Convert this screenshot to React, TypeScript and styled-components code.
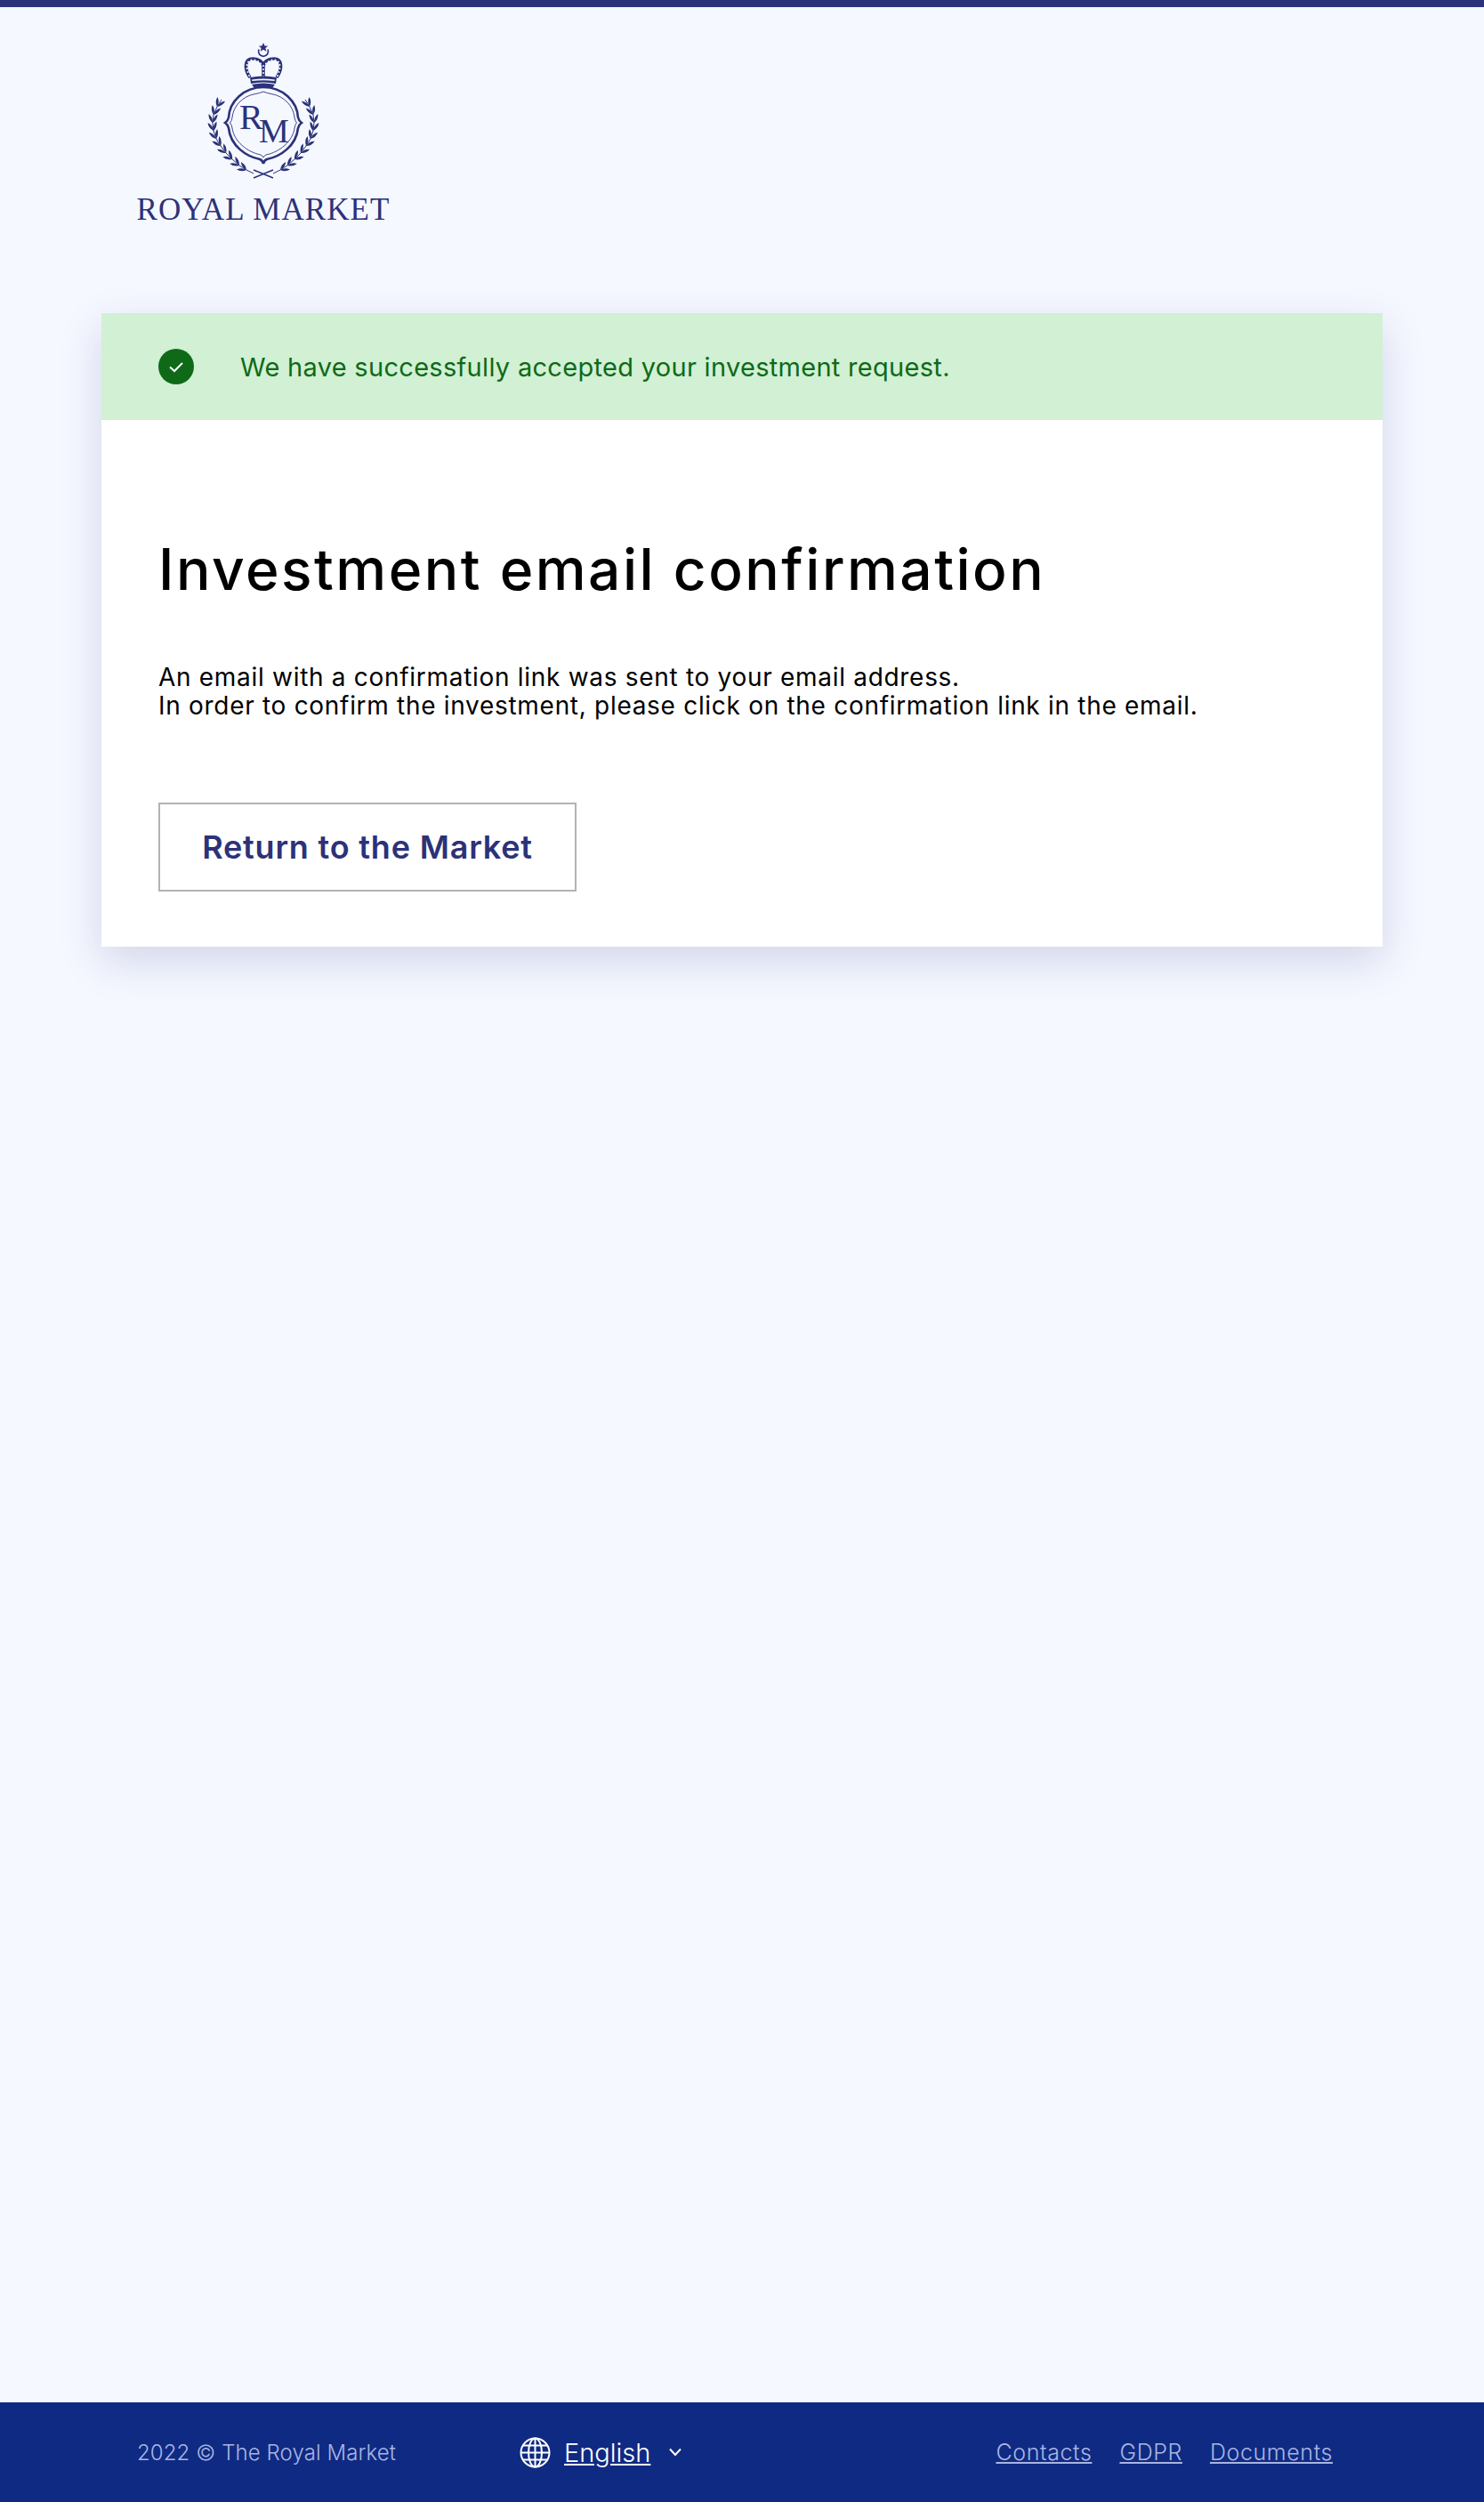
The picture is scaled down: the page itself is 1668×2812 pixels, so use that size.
import styled, { createGlobalStyle } from "styled-components";

const GlobalStyle = createGlobalStyle`
  html, body { margin: 0; padding: 0; }
  body { background: #f5f8ff; font-family: Inter, "Noto Sans", sans-serif; }
`;

const Page = styled.div`
  min-height: 2812px;
  display: flex;
  flex-direction: column;
  border-top: 8px solid #2c3279;
  box-sizing: border-box;
`;
const Header = styled.header`
  padding: 32px 0 0 154px;
  height: 344px;
  box-sizing: border-box;
`;
const Logo = styled.div`
  width: 284px;
  display: flex;
  flex-direction: column;
  align-items: center;
  color: #2c3279;
`;
const EmblemSvg = styled.svg`
  margin-right: 2px;
`;
const Wordmark = styled.div`
  font-family: "Liberation Serif", serif;
  font-size: 35px;
  line-height: 40px;
  letter-spacing: 1.1px;
  white-space: nowrap;
  margin-top: 6px;
`;
const Card = styled.main`
  margin: 0 114px;
  background: #fff;
  box-shadow: 0 16px 44px rgba(40, 50, 125, 0.17);
`;
const Banner = styled.div`
  height: 120px;
  background: #d1f0d4;
  display: flex;
  align-items: center;
  gap: 52px;
  padding-left: 64px;
  color: #0e6a17;
  font-size: 29px;
  letter-spacing: 0.3px;
`;
const CheckBadge = styled.svg`
  width: 40px;
  height: 40px;
  flex: none;
`;
const Body = styled.div`
  padding: 132px 64px 62px;
`;
const Title = styled.h1`
  margin: 0;
  font-size: 64px;
  line-height: 72px;
  font-weight: 500;
  letter-spacing: 2.5px;
  color: #000;
`;
const Text = styled.p`
  margin: 69px 0 0;
  font-size: 28px;
  line-height: 32px;
  letter-spacing: 0.7px;
  color: #000;
`;
const ReturnButton = styled.a`
  margin-top: 93px;
  width: 470px;
  height: 100px;
  box-sizing: border-box;
  display: flex;
  align-items: center;
  justify-content: center;
  border: 2px solid #b3b3b3;
  color: #2c3279;
  font-size: 36px;
  font-weight: 600;
  letter-spacing: 0.8px;
`;
const Footer = styled.footer`
  margin-top: auto;
  height: 112px;
  background: #0f2a83;
  display: flex;
  align-items: center;
  padding: 0 170px 0 154px;
  color: #a9b5e0;
  font-size: 25px;
  font-weight: 300;
`;
const Copy = styled.span`
  width: 430px;
  flex: none;
  font-size: 24px;
  letter-spacing: 0.1px;
`;
const Language = styled.div`
  display: flex;
  align-items: center;
  color: #fff;
  font-size: 29px;
`;
const LanguageLabel = styled.span`
  margin: 0 20px 0 15px;
  text-decoration: underline;
`;
const Links = styled.nav`
  margin-left: auto;
  display: flex;
  gap: 31px;
  letter-spacing: 0.6px;
`;
const FooterLink = styled.a`
  color: #a9b5e0;
  text-decoration: underline;
`;

// stem of the left laurel branch, top to bottom
const stem = [
  [24, 72], [19, 80], [15, 89], [14, 98], [15, 107], [18, 116],
  [23, 124], [29, 132], [36, 139], [44, 146], [52, 151], [60, 155],
];

const leaf = (x: number, y: number, deg: number, len: number, w: number) => {
  const a = (deg * Math.PI) / 180;
  const dx = Math.cos(a);
  const dy = Math.sin(a);
  const tx = x + dx * len;
  const ty = y + dy * len;
  const mx = x + dx * len * 0.5;
  const my = y + dy * len * 0.5;
  return `M${x} ${y}Q${(mx - dy * w).toFixed(1)} ${(my + dx * w).toFixed(1)} ${tx.toFixed(1)} ${ty.toFixed(1)}Q${(mx + dy * w).toFixed(1)} ${(my - dx * w).toFixed(1)} ${x} ${y}Z`;
};

const laurelLeaves = stem
  .slice(1, 11)
  .map(([x, y], i) => {
    const [px, py] = stem[i];
    const dir = (Math.atan2(py - y, px - x) * 180) / Math.PI;
    return leaf(x, y, dir - 30, 11, 3) + leaf(x, y, dir + 24, 11, 3);
  })
  .join("");

const stemLine = "M" + stem.map(([x, y]) => `${x} ${y}`).join("L");

const crownDots = [
  [55, 45], [53.5, 41], [52.5, 37], [52.5, 33], [54, 29.5], [57.5, 27.5], [61.5, 27.5],
  [65, 29], [68, 31.5], [71, 34], [74, 31.5], [77, 29], [80.5, 27.5], [84.5, 27.5],
  [88, 29.5], [89.5, 33], [89.5, 37], [88.5, 41], [87, 45], [71, 38], [71, 42], [71, 46],
];

function Emblem() {
  return (
    <EmblemSvg width="140" height="170" viewBox="0 0 140 170" fill="#2c3279">
      <path d="M71 8l1.500 3.400 3.700.3-2.800 2.400.9 3.600-3.300-1.900-3.300 1.900.9-3.600-2.800-2.400 3.700-.3z" />
      <path d="M66 15.500A5.500 5.500 0 1 0 76 15.500" fill="none" stroke="#2c3279" strokeWidth="1.7" />
      <path
        d="M56 47C49 37 50 26 59 26C65 26 70 29 71 34C72 29 77 26 83 26C92 26 93 37 86 47M71 34V48"
        fill="none"
        stroke="#2c3279"
        strokeWidth="3.6"
      />
      <g fill="#f5f8ff">
        {crownDots.map(([x, y]) => (
          <circle key={`${x}-${y}`} cx={x} cy={y} r="1" />
        ))}
      </g>
      <path d="M56 47q15-3 30 0l-1 7q-14-3-28 0z" />
      <path d="M58 49.500q13-2 26 0l-.5 1.500q-12.500-1.500-25 0z" fill="#f5f8ff" />
      <path d="M58 55q13-3 26 0l-3 4q-10-1.500-20 0z" />
      <path
        d="M71 58C49 58 33 74 32 92Q31 96 28 98Q31 100 32 104C34 124 52 136 67 139Q70 140 71 144Q72 140 75 139C90 136 108 124 110 104Q111 100 114 98Q111 96 110 92C109 74 93 58 71 58Z"
        fill="none"
        stroke="#2c3279"
        strokeWidth="2.6"
      />
      <path
        d="M71 63Q66 65 62 65.500C47 68 37 80 36 92Q35.500 96 33.500 98Q35.500 100 36 104C38 119 53 131 68 134Q70 135 71 137Q72 135 74 134C89 131 104 119 106 104Q106.500 100 108.500 98Q106.500 96 106 92C105 80 95 68 80 65.500Q76 65 71 63Z"
        fill="none"
        stroke="#2c3279"
        strokeWidth="0.9"
      />
      <text fontFamily="'Liberation Serif', serif" fontSize="40">
        <tspan x="44" y="105">R</tspan>
        <tspan x="66" y="120" fontSize="38">M</tspan>
      </text>
      <g>
        <path d={laurelLeaves} />
        <path d={stemLine} fill="none" stroke="#2c3279" strokeWidth="1" />
      </g>
      <g transform="matrix(-1 0 0 1 142 0)">
        <path d={laurelLeaves} />
        <path d={stemLine} fill="none" stroke="#2c3279" strokeWidth="1" />
      </g>
      <path d="M60 160L82 151M82 160L60 151" stroke="#2c3279" strokeWidth="1.5" fill="none" />
    </EmblemSvg>
  );
}

export default function App() {
  return (
    <Page>
      <GlobalStyle />
      <Header>
        <Logo>
          <Emblem />
          <Wordmark>ROYAL MARKET</Wordmark>
        </Logo>
      </Header>
      <Card>
        <Banner>
          <CheckBadge viewBox="0 0 40 40">
            <circle cx="20" cy="20" r="20" fill="#0e6a17" />
            <path d="M13 20.500l5 4.500 9-9" fill="none" stroke="#fff" strokeWidth="2" />
          </CheckBadge>
          We have successfully accepted your investment request.
        </Banner>
        <Body>
          <Title>Investment email confirmation</Title>
          <Text>
            An email with a confirmation link was sent to your email address.
            <br />
            In order to confirm the investment, please click on the confirmation link in the email.
          </Text>
          <ReturnButton>Return to the Market</ReturnButton>
        </Body>
      </Card>
      <Footer>
        <Copy>2022 © The Royal Market</Copy>
        <Language>
          <svg width="35" height="35" viewBox="0 0 35 35" fill="none" stroke="#fff" strokeWidth="2">
            <circle cx="17.500" cy="17.500" r="16" />
            <ellipse cx="17.500" cy="17.500" rx="7.500" ry="16" />
            <path d="M17.500 1.500v32M1.500 17.500h32M4 9.500h27M4 25.500h27" />
          </svg>
          <LanguageLabel>English</LanguageLabel>
          <svg width="16" height="10" viewBox="0 0 16 10" fill="none" stroke="#fff" strokeWidth="2">
            <path d="M2 1.500l6 6.500 6-6.500" />
          </svg>
        </Language>
        <Links>
          <FooterLink>Contacts</FooterLink>
          <FooterLink>GDPR</FooterLink>
          <FooterLink>Documents</FooterLink>
        </Links>
      </Footer>
    </Page>
  );
}
